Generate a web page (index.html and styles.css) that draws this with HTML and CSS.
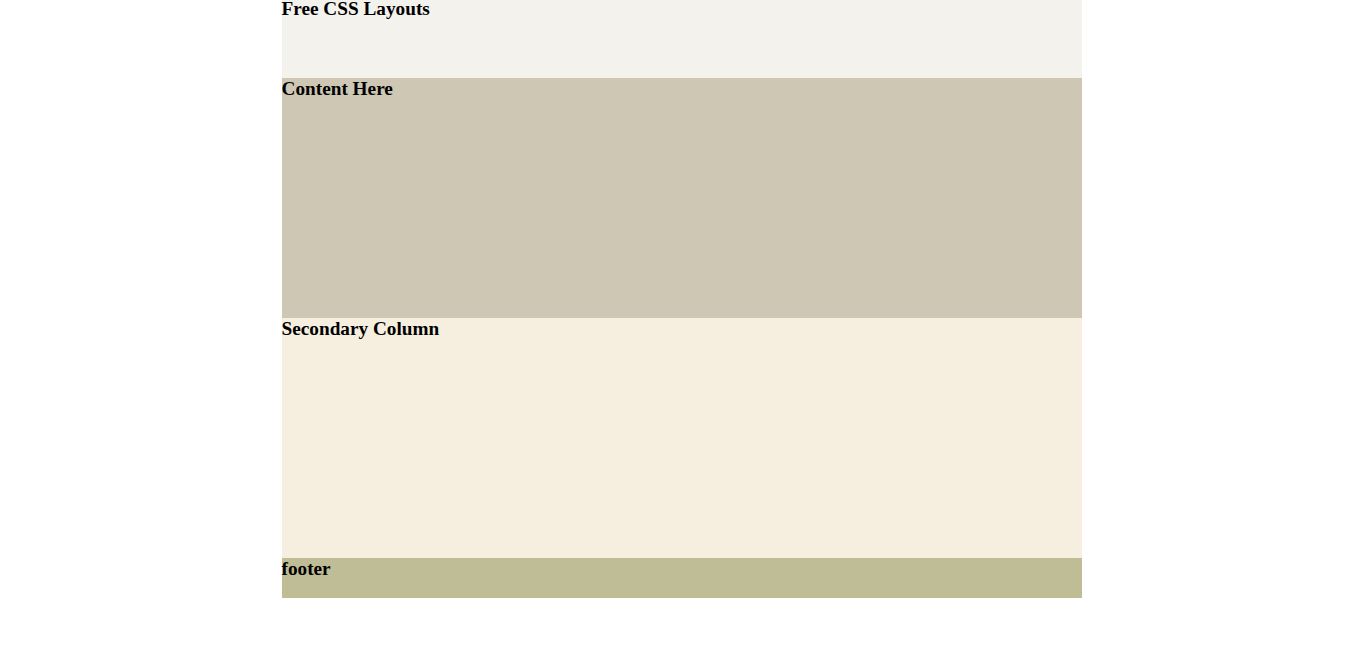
FILE: index.html
```html
<!DOCTYPE html>
<html>
<head>
<meta charset="utf-8">
<link rel="stylesheet" href="styles.css">
</head>
<body>
<div class="wrap">
  <div class="header"><h2 class="title top">Free CSS Layouts</h2></div>
  <div class="content"><h2 class="title">Content Here</h2></div>
  <div class="secondary"><h2 class="title">Secondary Column</h2></div>
  <div class="footer"><h2 class="title">footer</h2></div>
</div>
</body>
</html>
```

FILE: styles.css
```css
html, body { margin: 0; padding: 0; background: #fff; }
body { font-family: "Liberation Serif", "Times New Roman", serif; color: #000; }
.wrap { width: 800px; margin: 0 auto; display: flex; flex-direction: column; }
.title { margin: 0; font-size: 19.25px; font-weight: bold; line-height: 22px; }
.top { line-height: 18px; }
.header { height: 78px; background: #f3f2ed; }
.content { height: 240px; background: #cec7b4; }
.secondary { height: 240px; background: #f6efe0; }
.footer { height: 40px; background: #bfbd95; }
```
